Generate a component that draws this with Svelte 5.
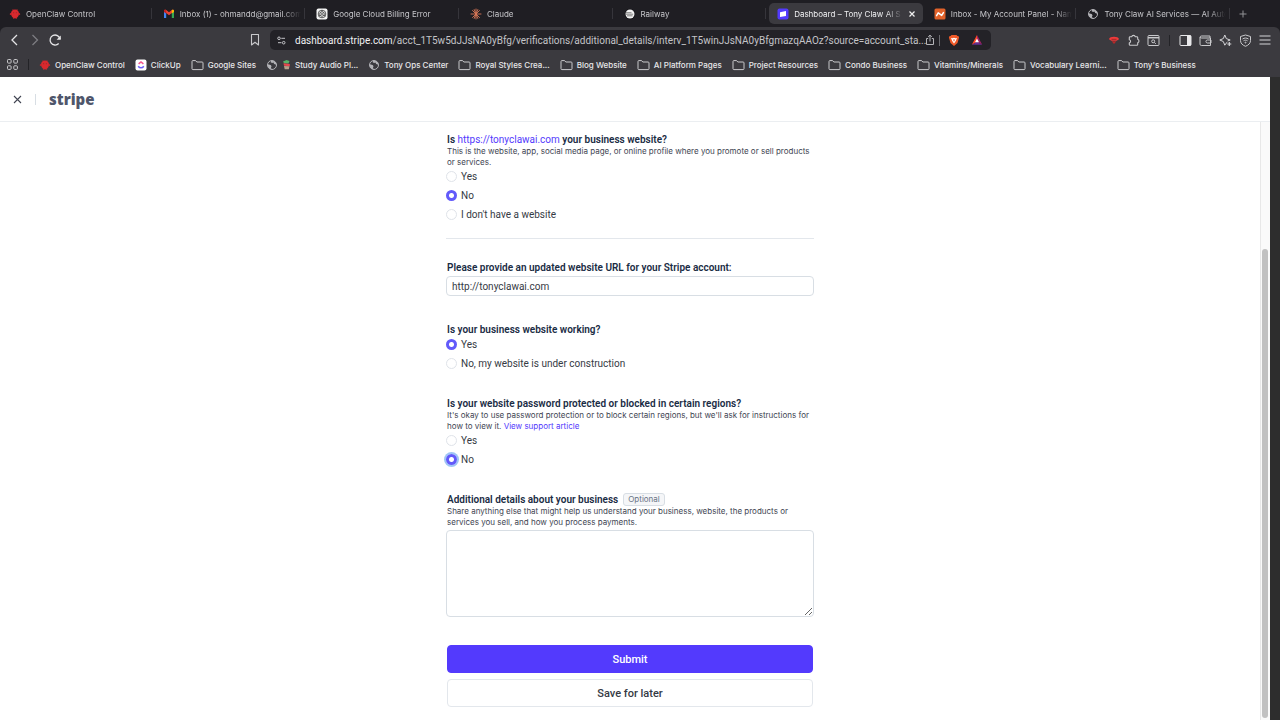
<script>
  const tabs = [
    { icon: 'claw', title: 'OpenClaw Control' },
    { icon: 'gmail', title: 'Inbox (1) - ohmandd@gmail.com' },
    { icon: 'openai', title: 'Google Cloud Billing Error' },
    { icon: 'claude', title: 'Claude' },
    { icon: 'railway', title: 'Railway' },
    { icon: 'stripe', title: 'Dashboard – Tony Claw AI S', active: true },
    { icon: 'namecheap', title: 'Inbox - My Account Panel - Nam' },
    { icon: 'globe', title: 'Tony Claw AI Services — AI Auto' }
  ];

  const bookmarks = [
    { icon: 'claw', title: 'OpenClaw Control' },
    { icon: 'clickup', title: 'ClickUp' },
    { icon: 'folder', title: 'Google Sites' },
    { icon: 'globe', title: 'Study Audio Pl...', extra: true },
    { icon: 'globe', title: 'Tony Ops Center' },
    { icon: 'folder', title: 'Royal Styles Crea...' },
    { icon: 'folder', title: 'Blog Website' },
    { icon: 'folder', title: 'AI Platform Pages' },
    { icon: 'folder', title: 'Project Resources' },
    { icon: 'folder', title: 'Condo Business' },
    { icon: 'folder', title: 'Vitamins/Minerals' },
    { icon: 'folder', title: 'Vocabulary Learni...' },
    { icon: 'folder', title: "Tony's Business" }
  ];

  let isSite = $state('no');
  let working = $state('yes');
  let blocked = $state('no');
  let url = $state('http://tonyclawai.com');
  let details = $state('');
</script>

{#snippet icon(name)}
  {#if name === 'claw'}
    <svg class="fav" viewBox="0 0 12 12"><path d="M4.200 2.200 3.600 1M7.800 2.200 8.400 1" stroke="#a3282c" stroke-width=".7" /><path d="M6 1.600c2.600 0 4 1.900 4 4 0 2.200-1.200 3.700-2.400 4.300V11h-.8v-.8H5.200V11h-.8V9.900C3.200 9.300 2 7.800 2 5.600c0-2.100 1.400-4 4-4Z" fill="#d9292e" /><path d="M2.200 5C.8 4.700.5 6 1 6.700c.5.500 1.200.3 1.600-.2M9.800 5c1.400-.3 1.700 1 1.200 1.700-.5.500-1.200.3-1.600-.2" fill="#c5262b" /><circle cx="4.600" cy="4.700" r=".6" fill="#a3282c" /><circle cx="7.400" cy="4.700" r=".6" fill="#a3282c" /></svg>
  {:else if name === 'gmail'}
    <svg class="fav" viewBox="0 0 12 12"><path d="M1 3v7h2.200V5.500Z" fill="#4285f4" /><path d="M11 3v7H8.800V5.500Z" fill="#34a853" /><path d="M1 3.200V3c0-1.300 1.300-1.600 2.200-1L6 4.200 8.800 2c.9-.6 2.200-.3 2.200 1v.2L6 7.300Z" fill="#ea4335" /><path d="M8.800 2c.9-.6 2.200-.3 2.200 1v.9L8.800 5.600Z" fill="#fbbc04" /><path d="M3.200 2C2.300 1.400 1 1.700 1 3v.9l2.200 1.700Z" fill="#c5221f" /></svg>
  {:else if name === 'openai'}
    <svg class="fav" viewBox="0 0 12 12"><rect x=".5" y=".5" width="11" height="11" rx="2" fill="#f4f4f4" /><g fill="none" stroke="#333" stroke-width=".8"><circle cx="6" cy="6" r="3.800" /><path d="M6 3.600 8.100 4.800V7.200L6 8.400 3.900 7.200V4.800ZM6 3.600V2.200M8.100 7.200l1.200.8M3.900 7.200l-1.200.8" /></g><circle cx="6" cy="6" r=".9" fill="#555" /></svg>
  {:else if name === 'claude'}
    <svg class="fav" viewBox="0 0 12 12"><path d="M6 1v10M1 6h10M2.500 2.500l7 7M9.500 2.500l-7 7M4.200 1.600l3.600 8.800M7.800 1.600 4.200 10.400" stroke="#d97757" stroke-width=".9" stroke-linecap="round" /></svg>
  {:else if name === 'railway'}
    <svg class="fav" viewBox="0 0 12 12"><circle cx="6" cy="6" r="5.200" fill="#0f0e13" /><circle cx="6" cy="6" r="4.500" fill="#f2f2f2" /><path d="M2 4.700h5.500M2 6.200h7.200M3 7.800h5.500" stroke="#555" stroke-width=".7" /></svg>
  {:else if name === 'stripe'}
    <svg class="fav" viewBox="0 0 12 12"><rect x=".5" y=".5" width="11" height="11" rx="2" fill="#533afd" /><path d="M3 4.300 9 3v4.900L3 9Z" fill="#fff" /></svg>
  {:else if name === 'namecheap'}
    <svg class="fav" viewBox="0 0 12 12"><rect x=".5" y=".5" width="11" height="11" rx="1.500" fill="#e2622a" /><path d="M2.600 7.600 4.200 4.800 7.700 7.400 9.400 4.600" fill="none" stroke="#fff" stroke-width="1.500" stroke-linejoin="round" stroke-linecap="round" /></svg>
  {:else if name === 'clickup'}
    <svg class="fav" viewBox="0 0 12 12"><rect x=".5" y=".5" width="11" height="11" rx="2" fill="#fff" /><path d="M3.200 7.200c1.600 2.100 4 2.100 5.600 0" fill="none" stroke="#6b5cf6" stroke-width="1.500" /><path d="M3.600 4.900 6 2.900l2.400 2" fill="none" stroke="#f3558e" stroke-width="1.500" /></svg>
  {:else if name === 'folder'}
    <svg class="fav folder" viewBox="0 0 13 12"><path d="M1 9.700V2.500c0-.6.300-.9.900-.9h2.700l1.200 1.400h5.300c.6 0 .9.300.9.900v5.800c0 .6-.3.900-.9.900H1.900c-.6 0-.9-.3-.9-.9Z" fill="none" stroke="#c9c9cc" /></svg>
  {:else}
    <svg class="fav" viewBox="0 0 12 12"><circle cx="6" cy="6" r="4.500" fill="none" stroke="#b4b4b8" /><path d="M1.800 5.200 4.600 6l1 1.300-.6 1 .5 1.900C3 10 1.500 8 1.800 5.200ZM5 1.700l-.3 1.600 1.400.8 1.300-.5.800 1.400 2.200.8C10.400 3.400 8 1.200 5 1.700Z" fill="#b4b4b8" /></svg>
  {/if}
{/snippet}

<div class="browser">
  <nav class="tabs" aria-label="Tabs">
    {#each tabs as tab}
      <div class="tab" class:active={tab.active}>
        {@render icon(tab.icon)}
        <span class="tab-title">{tab.title}</span>
        {#if tab.active}
          <button class="plain" aria-label="Close tab"><svg width="8" height="8" viewBox="0 0 8 8"><path d="m1.500 1.500 5 5m0-5-5 5" stroke="#f0f0f0" stroke-width="1.200" /></svg></button>
        {/if}
      </div>
    {/each}
    <button class="plain new-tab" aria-label="New tab"><svg width="8" height="8" viewBox="0 0 8 8"><path d="M4 .5v7M.5 4h7" stroke="#929296" /></svg></button>
  </nav>

  <div class="toolbar">
    <div class="nav-buttons">
      <button class="plain" aria-label="Back"><svg width="14" height="14" viewBox="0 0 14 14"><path d="M9 2 4 7l5 5" fill="none" stroke="#e4e4e6" stroke-width="1.300" /></svg></button>
      <button class="plain" aria-label="Forward"><svg width="14" height="14" viewBox="0 0 14 14"><path d="m4.500 2 5 5-5 5" fill="none" stroke="#7d7d82" stroke-width="1.300" /></svg></button>
      <button class="plain" aria-label="Reload"><svg width="14" height="14" viewBox="0 0 14 14"><path d="M10.700 10.500A5 5 0 1 1 12 6" fill="none" stroke="#e4e4e6" stroke-width="1.300" /><path d="M12.800 2.500v4.300H8.600Z" fill="#e4e4e6" /></svg></button>
    </div>
    <div class="address-group">
      <button class="plain" aria-label="Bookmark this page"><svg width="12" height="14" viewBox="0 0 12 14"><path d="M2.500 1.500h7v10.500L6 9.200 2.500 12Z" fill="none" stroke="#c9c9cc" stroke-width="1.100" stroke-linejoin="round" /></svg></button>
      <div class="address">
        <svg width="11" height="11" viewBox="0 0 11 11" fill="none" stroke="#c4c4c8"><circle cx="3" cy="3.300" r="1.300" /><path d="M5.300 3.300H9M2 7.700h3.500" /><circle cx="7.700" cy="7.700" r="1.300" /></svg>
        <span class="url"><b>dashboard.stripe.com</b>/acct_1T5w5dJJsNA0yBfg/verifications/additional_details/interv_1T5winJJsNA0yBfgmazqAAOz?source=account_sta...</span>
        <div class="share">
          <button class="plain" aria-label="Share"><svg width="10" height="12" viewBox="0 0 10 12" fill="none" stroke="#b4b4b8"><path d="M3.200 4.500H1.500v6h7v-6H6.800M5 7.500V1.200M3.200 2.900 5 1.100l1.800 1.800" /></svg></button>
          <i class="bar"></i>
        </div>
        <button class="plain" aria-label="Shields"><svg width="12" height="13" viewBox="0 0 12 13"><path d="M3.500 1h5l.9 1 1-.1.700 1.600-.4 1.200L9.500 9 6 12 2.500 9 1.300 4.700.9 3.500l.7-1.600 1 .1Z" fill="#f15a29" /><path d="m3 4 1.700.2L6 3.800l1.300.4L9 4 7.800 7 6 9.600 4.200 7Z" fill="#fff" /><path d="M5 5.500h2L6 7.800Z" fill="#f15a29" /></svg></button>
        <button class="plain rewards" aria-label="Rewards"><svg width="12" height="12" viewBox="0 0 12 12"><path d="M6 1 .8 10.700 6 7.800Z" fill="#ff4724" /><path d="m6 1 5.200 9.700L6 7.800Z" fill="#9e1f63" /><path d="M.8 10.700h10.400L6 7.800Z" fill="#662d91" /><path d="m6 4.500 2 3.800H4Z" fill="#fff" /></svg></button>
      </div>
    </div>
    <div class="extensions">
      <button class="plain" aria-label="Extension"><svg width="12" height="12" viewBox="0 0 12 12"><path d="M1 5.200c.6-3.200 9.400-3.200 10 0L8.600 6.800H3.400Z" fill="#ef3b3b" /><path d="M3.600 7.200 6 10l2.400-2.800Z" fill="#b92a2a" /><path d="M3.500 5.300h5" stroke="#7d1d1d" stroke-width=".7" /></svg></button>
      <button class="plain" aria-label="Extensions"><svg width="13" height="13" viewBox="0 0 13 13"><path d="M3.200 2.700h1.600c.3-1.800 3.100-1.800 3.400 0h1.600c.6 0 .9.300.9.900v1.700c1.700.4 1.700 3 0 3.400v1.700c0 .6-.3.900-.9.900H3.200c-.6 0-.9-.3-.9-.9V8.900c1.700-.2 1.700-2.900 0-3.100V3.600c0-.6.3-.9.900-.9Z" fill="none" stroke="#c9c9cc" stroke-width="1.100" stroke-linejoin="round" /></svg></button>
      <button class="plain" aria-label="Search tabs"><svg width="13" height="13" viewBox="0 0 13 13" fill="none" stroke="#c9c9cc"><rect x="1" y="1.500" width="11" height="10" rx="1" /><path d="M1 3.700h11" stroke-width="1.500" /><circle cx="6.200" cy="7.300" r="1.500" /><path d="m7.300 8.400 1.500 1.500" /></svg></button>
      <i class="bar dark"></i>
      <button class="plain" aria-label="Side panel"><svg width="13" height="13" viewBox="0 0 13 13"><rect x="1" y="1.500" width="11" height="10" rx="1" fill="none" stroke="#e8e8ea" /><path d="M8 1.500h4v10H8Z" fill="#e8e8ea" /></svg></button>
      <button class="plain" aria-label="Wallet"><svg width="13" height="13" viewBox="0 0 13 13" fill="none" stroke="#c9c9cc"><path d="M11 4V2H2.500C.7 2 .7 4 2.500 4h9v7.500H2.300c-.8 0-1.300-.5-1.300-1.300V3M12 6H8.300c-1.800 0-1.800 3 0 3H12Z" /></svg></button>
      <button class="plain" aria-label="Assistant"><svg width="13" height="13" viewBox="0 0 13 13" fill="none" stroke="#d4d4d7"><path d="M8 8.200 5.800 11.200 4.300 7.500.8 6l3.500-1.400L5.800 1l1.500 3.600L11.200 6 8.600 7" stroke-linejoin="round" /><path d="M10.300 8v4M8.300 10h4" stroke-width="1.200" /></svg></button>
      <button class="plain" aria-label="VPN"><svg width="13" height="13" viewBox="0 0 13 13" fill="none" stroke="#c9c9cc"><path d="M6.500 1 11.500 2.500v4c0 2.700-2 4.700-5 5.800-3-1.100-5-3.100-5-5.800v-4Z" /><path d="M3.500 5c2-1.300 4-1.300 6 0M4.500 6.800c1.300-.8 2.700-.8 4 0" /><circle cx="6.500" cy="8.600" r=".5" /></svg></button>
      <button class="plain" aria-label="Menu"><svg width="12" height="12" viewBox="0 0 12 12"><path d="M.5 2h11M.5 6h11M.5 10h11" stroke="#d4d4d7" stroke-width="1.200" /></svg></button>
    </div>
  </div>

  <nav class="bookmarks" aria-label="Bookmarks">
    <button class="plain" aria-label="All bookmarks"><svg width="11" height="11" viewBox="0 0 11 11" fill="none" stroke="#c9c9cc"><rect x=".5" y=".5" width="3.600" height="3.600" rx=".8" /><rect x="6.800" y=".5" width="3.600" height="3.600" rx=".8" /><rect x=".5" y="6.800" width="3.600" height="3.600" rx=".8" /><rect x="6.800" y="6.800" width="3.600" height="3.600" rx=".8" /></svg></button>
    <i class="bar dark"></i>
    {#each bookmarks as mark}
      <a href="#top" class="bookmark">
        {@render icon(mark.icon)}
        {#if mark.extra}
          <svg width="9" height="11" viewBox="0 0 9 11"><path d="M1 2.500 4.500 1 7.500 2 6.500 4.500 2 4.300Z" fill="#58b368" /><path d="M1.500 4.300 7.800 5v2.200L2 6.800Z" fill="#e5484d" /><path d="m2 7 5.500.3-.7 2.900H2.700Z" fill="#b8a08a" /></svg>
        {/if}
        <span>{mark.title}</span>
      </a>
    {/each}
  </nav>

  <div class="window">
    <div class="page">
      <header>
        <button class="plain" aria-label="Close"><svg width="9" height="9" viewBox="0 0 9 9"><path d="m1 1 7 7m0-7L1 8" stroke="#414552" stroke-width="1.100" /></svg></button>
        <i class="rule"></i>
        <span class="logo">stripe</span>
      </header>

      <div class="scroller">
        <main>
          <form onsubmit={(e) => e.preventDefault()}>
            <fieldset>
              <legend>Is <a href="#site">https://tonyclawai.com</a> your business website?</legend>
              <p>This is the website, app, social media page, or online profile where you promote or sell products or services.</p>
              <div class="options">
                <label><input type="radio" name="site" value="yes" bind:group={isSite} />Yes</label>
                <label><input type="radio" name="site" value="no" bind:group={isSite} />No</label>
                <label><input type="radio" name="site" value="none" bind:group={isSite} />I don't have a website</label>
              </div>
            </fieldset>

            <hr />

            <div class="field">
              <label class="heading" for="url">Please provide an updated website URL for your Stripe account:</label>
              <input id="url" type="text" bind:value={url} />
            </div>

            <fieldset>
              <legend>Is your business website working?</legend>
              <div class="options">
                <label><input type="radio" name="working" value="yes" bind:group={working} />Yes</label>
                <label><input type="radio" name="working" value="no" bind:group={working} />No, my website is under construction</label>
              </div>
            </fieldset>

            <fieldset>
              <legend>Is your website password protected or blocked in certain regions?</legend>
              <p>It's okay to use password protection or to block certain regions, but we'll ask for instructions for how to view it. <a href="#support">View support article</a></p>
              <div class="options">
                <label><input type="radio" name="blocked" value="yes" bind:group={blocked} />Yes</label>
                <label><input class="focused" type="radio" name="blocked" value="no" bind:group={blocked} />No</label>
              </div>
            </fieldset>

            <div class="field">
              <div class="heading-row">
                <label class="heading" for="details">Additional details about your business</label>
                <span class="badge">Optional</span>
              </div>
              <p>Share anything else that might help us understand your business, website, the products or services you sell, and how you process payments.</p>
              <textarea id="details" bind:value={details}></textarea>
            </div>

            <div class="actions">
              <button type="submit" class="primary">Submit</button>
              <button type="button" class="secondary">Save for later</button>
            </div>
          </form>
        </main>
        <div class="scrollbar"><i class="above"></i><i class="thumb"></i></div>
      </div>
    </div>
  </div>
</div>

<style>
  :global(body) {
    margin: 0;
    background: #2d2d2d;
  }

  * {
    box-sizing: border-box;
  }

  svg {
    display: block;
    flex: none;
  }

  .browser {
    display: flex;
    flex-direction: column;
    height: 100vh;
    overflow: hidden;
    font-family: Roboto, Inter, sans-serif;
    background: #1f1e23;
  }

  .plain {
    display: flex;
    flex: none;
    padding: 0;
    border: 0;
    background: none;
  }

  .fav {
    width: 12px;
    height: 12px;
  }

  .folder {
    width: 13px;
  }

  .bar {
    flex: none;
    width: 1px;
    height: 11px;
    background: #6b6b70;
  }

  .bar.dark {
    background: #232327;
  }

  .tabs {
    display: flex;
    align-items: center;
    height: 27px;
    padding: 0 33px 0 1px;
    background: #1f1e23;
    font-family: Inter, sans-serif;
  }

  .tab {
    display: flex;
    flex: 1 1 0;
    align-items: center;
    gap: 5px;
    min-width: 0;
    height: 21px;
    margin-right: 3px;
    padding: 0 4px 0 8px;
    border-radius: 5px;
    color: #c6c6ca;
    font-size: 8px;
  }

  .tab:not(.active) {
    border-radius: 0;
    background: linear-gradient(#36353b, #36353b) right center / 1px 11px no-repeat;
  }

  .tab.active {
    padding-right: 7px;
    background: #3b3a3f;
    color: #f0f0f2;
  }

  .tab-title {
    flex: 1;
    min-width: 0;
    overflow: hidden;
    white-space: nowrap;
    mask-image: linear-gradient(to right, #000 calc(100% - 18px), transparent);
  }

  .new-tab {
    margin-left: 6px;
  }

  .toolbar {
    display: flex;
    align-items: center;
    height: 26px;
    padding: 0 9px 0 8px;
    border-radius: 6px 6px 0 0;
    background: #3b3a3f;
  }

  .nav-buttons {
    display: flex;
    gap: 6px;
  }

  .address-group {
    display: flex;
    flex: 1;
    align-items: center;
    gap: 9px;
    min-width: 0;
    margin: 0 117px 0 187px;
  }

  .address {
    display: flex;
    flex: 1;
    align-items: center;
    gap: 8px;
    min-width: 0;
    height: 20px;
    padding: 0 8px 0 6px;
    border-radius: 5px;
    background: #232227;
  }

  .url {
    flex: 1;
    min-width: 0;
    color: #c4c4c8;
    font-size: 10px;
    white-space: nowrap;
  }

  .url b {
    color: #f0f0f2;
    font-weight: 400;
  }

  .share {
    display: flex;
    align-items: center;
    gap: 4px;
  }

  .rewards {
    margin-left: 3px;
  }

  .extensions {
    display: flex;
    align-items: center;
    gap: 7px;
  }

  .extensions .bar {
    margin: 0 2px;
  }

  .bookmarks {
    display: flex;
    align-items: center;
    gap: 10px;
    height: 24px;
    padding: 0 0 1px 7px;
    background: #3b3a3f;
    font-family: Inter, sans-serif;
  }

  .bookmark {
    display: flex;
    align-items: center;
    gap: 4px;
    font-size: 8px;
    font-weight: 500;
    white-space: nowrap;
  }

  .window {
    display: flex;
    flex: 1;
    min-height: 0;
    padding-right: 10px;
    background: #2d2d2d;
  }

  .page {
    display: flex;
    flex: 1;
    flex-direction: column;
    background: #fff;
  }

  header {
    display: flex;
    align-items: center;
    gap: 13px;
    height: 45px;
    padding-left: 13px;
    border-bottom: 1px solid #ebeef1;
  }

  .rule {
    width: 1px;
    height: 11px;
    background: #d8dee4;
  }

  .logo {
    color: #4f566b;
    font-family: "Open Sans", sans-serif;
    font-size: 15px;
    font-weight: 800;
    line-height: 22px;
  }

  .scroller {
    display: flex;
    flex: 1;
    min-height: 0;
  }

  main {
    flex: 1;
    padding: 11px 20px;
  }

  .scrollbar {
    display: flex;
    flex-direction: column;
    width: 10px;
    padding: 0 2px 2px 1px;
    border-left: 1px solid #e8e8e8;
    background: #fafafa;
  }

  .above {
    flex: 127;
  }

  .thumb {
    flex: 469;
    border-radius: 3px;
    background: #c1c1c1;
  }

  form {
    display: flex;
    flex-direction: column;
    gap: 27px;
    max-width: 368px;
    margin: 0 auto;
    color: #353a44;
    font-size: 10px;
  }

  fieldset {
    min-width: 0;
    margin: 0;
    padding: 0;
    border: 0;
  }

  legend,
  .heading {
    display: block;
    padding: 0 1px;
    color: #1a2c44;
    font-size: 10px;
    font-weight: 600;
    line-height: 13px;
  }

  a {
    color: #533afd;
    text-decoration: none;
  }

  a.bookmark {
    color: #e8e8ea;
  }

  legend a {
    font-weight: 400;
  }

  p {
    margin: 0;
    padding: 0 1px;
    color: #414552;
    font-family: Inter, sans-serif;
    font-size: 8px;
    line-height: 11px;
  }

  .options {
    display: flex;
    flex-direction: column;
    align-items: flex-start;
    gap: 6px;
    margin-top: 2px;
  }

  .options label {
    display: flex;
    align-items: center;
    gap: 4px;
    line-height: 13px;
  }

  input[type='radio'] {
    width: 11px;
    height: 11px;
    margin: 0;
    appearance: none;
    border: 1px solid #dfe3e9;
    border-radius: 50%;
    background: #fff;
  }

  input[type='radio']:checked {
    border: 0;
    background: radial-gradient(circle, #fff 2px, #625afa 3px);
  }

  input.focused {
    box-shadow: 0 0 0 2px #9fc6f5;
  }

  hr {
    width: 100%;
    height: 1px;
    margin: -10px 0 -5px;
    border: 0;
    background: #e3e7ec;
  }

  input[type='text'],
  textarea {
    display: block;
    width: 100%;
    margin: 2px 0 0;
    border: 1px solid #d8dee4;
    border-radius: 4px;
    background: #fff;
    color: #353a44;
    font: 10px Roboto, sans-serif;
  }

  input[type='text'] {
    height: 20px;
    padding: 0 5px;
  }

  textarea {
    height: 87px;
    padding: 5px;
    resize: vertical;
  }

  .heading-row {
    display: flex;
    align-items: center;
    gap: 4px;
    height: 13px;
  }

  .badge {
    padding: 0 4px;
    border: 1px solid #d8dee4;
    border-radius: 3px;
    background: #f5f6f8;
    color: #687385;
    font-family: Inter, sans-serif;
    font-size: 8px;
    line-height: 11px;
  }

  .actions {
    display: flex;
    flex-direction: column;
    gap: 6px;
    padding: 1px;
  }

  .actions button {
    height: 28px;
    border: 1px solid #533afd;
    border-radius: 4px;
    background: #533afd;
    color: #fff;
    font: 500 11px Roboto, sans-serif;
  }

  .actions .secondary {
    border-color: #e3e7ec;
    background: #fff;
    color: #353a44;
  }
</style>
